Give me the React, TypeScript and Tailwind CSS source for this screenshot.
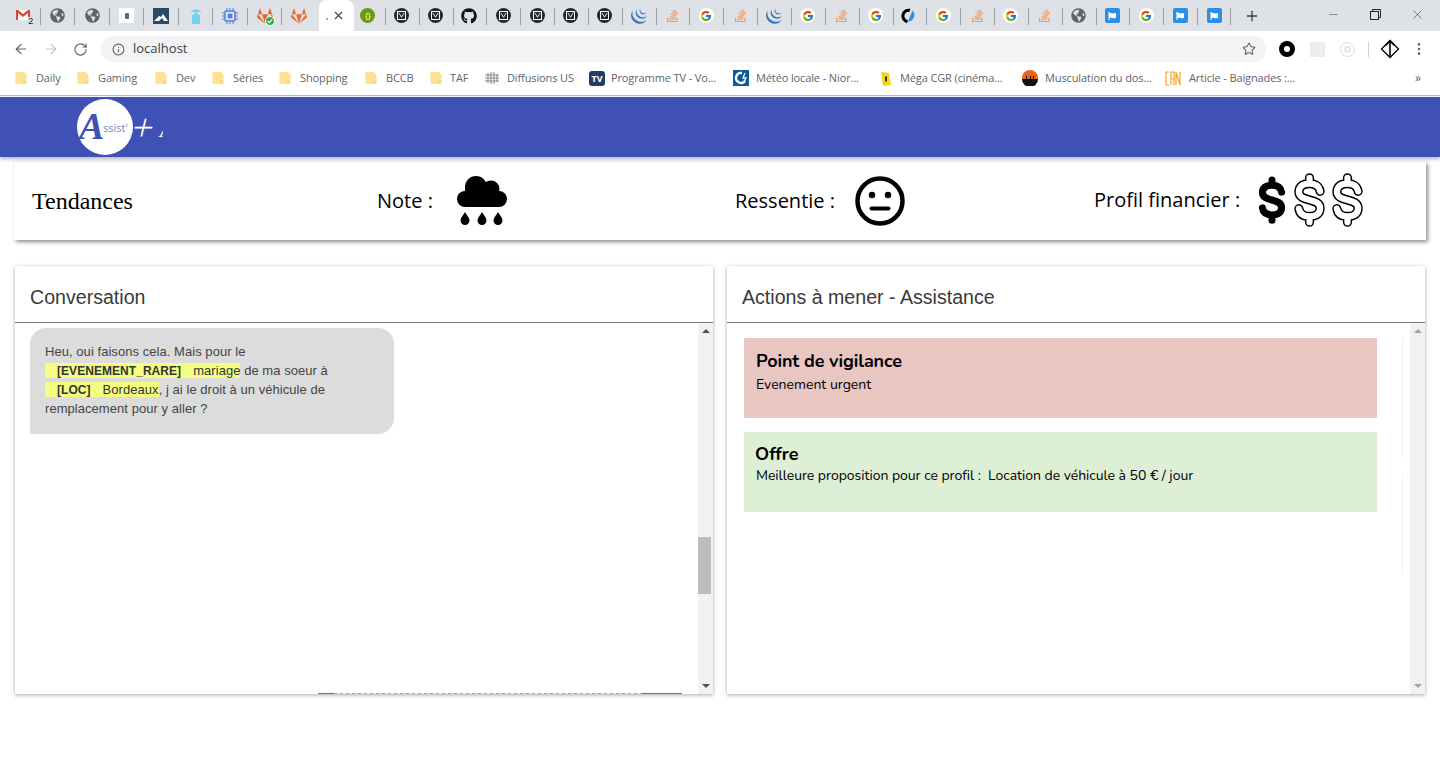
import { ArrowLeft, ArrowRight, EllipsisVertical, Info, Minus, Plus, RotateCw, Star, X } from 'lucide-react'
import { FaGithub, FaGitlab, FaStackOverflow, FaGlobeAmericas, FaFlag } from 'react-icons/fa'
import { FcGoogle } from 'react-icons/fc'
import { SiJquery } from 'react-icons/si'

type FavName = 'gmail' | 'globe' | 'doc' | 'mountain' | 'bottle' | 'chip' | 'gitcheck' | 'gitlab' | 'green' | 'm' | 'github' | 'jquery' | 'so' | 'google' | 'ring' | 'flag'

function Fav({ name }: { name: FavName }) {
  switch (name) {
    case 'gmail':
      return (
        <div className="relative w-4 h-4">
          <svg viewBox="0 0 16 16" className="w-4 h-4">
            <path d="M1 2h14v10H1z" fill="#fff" />
            <path d="M1 12V2h2l5 4 5-4h2v10h-2V5L8 9 3 5v7z" fill="#dc4437" />
          </svg>
          <span className="absolute right-[-2px] bottom-[-2px] text-[9px] leading-[9px] font-['Liberation_Sans',sans-serif] text-[#222] bg-[#dee1e6]">2</span>
        </div>
      )
    case 'globe':
      return <FaGlobeAmericas size={15} color="#5f6368" />
    case 'doc':
      return (
        <div className="w-[15px] h-[15px] bg-white flex items-center justify-center">
          <div className="w-[4px] h-[6px] rounded-[1px] bg-[#666]" />
        </div>
      )
    case 'mountain':
      return (
        <svg viewBox="0 0 16 16" className="w-4 h-4">
          <rect width="16" height="16" fill="#2c4a66" />
          <path d="M1 13l5-5 2 1 2-3 5 7z" fill="#fff" />
          <path d="M6 13l3-3 2 3z" fill="#2c4a66" />
        </svg>
      )
    case 'bottle':
      return (
        <svg viewBox="0 0 16 16" className="w-4 h-4">
          <path d="M3 3l5-2 5 2v1H9v2h2l1 2v8H4V8l1-2h2V4H3z" fill="#74d2f2" />
        </svg>
      )
    case 'chip':
      return (
        <svg viewBox="0 0 16 16" className="w-4 h-4" fill="none" stroke="#4d7fe6">
          <rect x="3" y="3" width="10" height="10" rx="1" strokeWidth="1.4" />
          <rect x="6" y="6" width="4" height="4" fill="#4d7fe6" strokeWidth="0.5" />
          <path d="M5 0v3M8 0v3M11 0v3M5 13v3M8 13v3M11 13v3M0 5h3M0 8h3M0 11h3M13 5h3M13 8h3M13 11h3" strokeWidth="1" />
        </svg>
      )
    case 'gitcheck':
      return (
        <div className="relative w-4 h-4">
          <FaGitlab size={16} color="#e8632c" />
          <div className="absolute right-[-2px] bottom-[-2px] w-[10px] h-[10px] rounded-full bg-[#2fa84f] border border-white flex items-center justify-center">
            <svg viewBox="0 0 10 10" className="w-2 h-2" fill="none" stroke="#fff" strokeWidth="1.5"><path d="M2 5l2 2 4-4" /></svg>
          </div>
        </div>
      )
    case 'gitlab':
      return <FaGitlab size={16} color="#ec6a2c" />
    case 'green':
      return (
        <div className="w-[15px] h-[15px] rounded-full bg-[#6b9a0b] flex items-center justify-center text-[8px] leading-none text-white font-['Liberation_Sans',sans-serif]">{'{}'}</div>
      )
    case 'm':
      return (
        <div className="w-[15px] h-[15px] rounded-full bg-[#24292e] flex items-center justify-center">
          <div className="w-[9px] h-[9px] border border-white flex items-center justify-center">
            <svg viewBox="0 0 8 8" className="w-[7px] h-[7px]" fill="none" stroke="#fff" strokeWidth="1"><path d="M1 1l3 5 3-5" /></svg>
          </div>
        </div>
      )
    case 'github':
      return <FaGithub size={16} color="#111" />
    case 'jquery':
      return <SiJquery size={16} color="#2f78bd" />
    case 'so':
      return <FaStackOverflow size={15} color="#ef9a5c" />
    case 'google':
      return (
        <div className="w-[15px] h-[15px] rounded-full bg-white flex items-center justify-center">
          <FcGoogle size={12} />
        </div>
      )
    case 'ring':
      return (
        <svg viewBox="0 0 16 16" className="w-4 h-4" fill="none">
          <path d="M9 2.300a5.800 5.800 0 1 0-2.500 11.400" stroke="#000" strokeWidth="3" />
          <path d="M11.500 2.500l-4.500 11a6.500 6.500 0 0 0 4.500-11z" fill="#2b8fe8" />
        </svg>
      )
    case 'flag':
      return (
        <div className="w-[15px] h-[15px] rounded-[2px] bg-[#2b8fe8] flex items-center justify-center">
          <FaFlag size={8} color="#fff" />
        </div>
      )
  }
}

const leftTabs: FavName[] = ['gmail', 'globe', 'globe', 'doc', 'mountain', 'bottle', 'chip', 'gitcheck', 'gitlab']
const rightTabs: FavName[] = ['green', 'm', 'm', 'github', 'm', 'm', 'm', 'm', 'jquery', 'so', 'google', 'so', 'jquery', 'google', 'so', 'google', 'ring', 'google', 'so', 'google', 'so', 'globe', 'flag', 'google', 'flag', 'flag']

function TabStrip() {
  return (
    <div className="h-[31px] bg-[#dee1e6] flex items-stretch pl-[6px]">
      {leftTabs.map((t, i) => (
        <div key={i} className="w-[34.5px] h-full flex items-center justify-center relative">
          <Fav name={t} />
          {i < leftTabs.length - 1 && <div className="absolute right-0 top-[8px] h-[17px] w-px bg-[#9aa0a6]" />}
        </div>
      ))}
      <div className="w-[35px] ml-[2.5px] -mr-[3px] h-full bg-white rounded-t-lg flex items-center pl-[7px] gap-[3.5px] shrink-0">
        <div className="w-[2px] h-[2px] mt-[7px] bg-[#f0a040]" />
        <X size={13} color="#3c4043" strokeWidth={2} />
      </div>
      {rightTabs.map((t, i) => (
        <div key={i} className="w-[33.85px] h-full flex items-center justify-center relative">
          <Fav name={t} />
          {i > 0 && <div className="absolute left-0 top-[8px] h-[17px] w-px bg-[#9aa0a6]" />}
          {i === rightTabs.length - 1 && <div className="absolute right-0 top-[8px] h-[17px] w-px bg-[#9aa0a6]" />}
        </div>
      ))}
      <div className="ml-[13px] flex items-center">
        <Plus size={16} color="#3c4043" strokeWidth={2} />
      </div>
      <div className="ml-auto flex items-center pr-[15px] -mt-[3px]">
        <Minus size={13} color="#3c4043" strokeWidth={1} />
        <svg viewBox="0 0 11 11" className="w-[11px] h-[11px] ml-[30px]" fill="none" stroke="#222" strokeWidth="1">
          <rect x="0.500" y="2.500" width="8" height="8" />
          <path d="M2.500 2.500v-2h8v8h-2" />
        </svg>
        <X size={15} color="#3c4043" strokeWidth={1} className="ml-[29px]" />
      </div>
    </div>
  )
}

function Toolbar() {
  return (
    <div className="h-[33px] bg-white flex items-center pt-[3px]">
      <div className="flex items-center pl-[13px] gap-[14px] w-[101px]">
        <ArrowLeft size={16} color="#5f6368" strokeWidth={1.8} />
        <ArrowRight size={16} color="#c0c3c7" strokeWidth={1.8} />
        <RotateCw size={15} color="#5f6368" strokeWidth={1.8} />
      </div>
      <div className="w-[1165px] h-[26px] rounded-full bg-[#f1f3f4] flex items-center pl-[11px] pr-[10px]">
        <Info size={13} color="#5f6368" strokeWidth={2} />
        <span className="ml-[8px] text-[13px] text-[#3c4043] font-['Open_Sans',sans-serif]">localhost</span>
        <Star size={14} color="#5f6368" strokeWidth={1.8} className="ml-auto" />
      </div>
      <div className="flex items-center ml-[13px] gap-[15px]">
        <div className="w-[16px] h-[16px] rounded-full border-[5px] border-black" />
        <div className="w-[15px] h-[15px] bg-[#ececec] flex items-center justify-center">
          <div className="w-[9px] h-[9px] rounded-full border border-[#f8f8f8]" />
        </div>
        <div className="w-[15px] h-[15px] rounded-full border border-[#dcdcdc] flex items-center justify-center">
          <div className="w-[7px] h-[7px] rounded-full border-2 border-[#e4e4e4]" />
        </div>
      </div>
      <div className="w-px h-[15px] bg-[#d0d3d6] ml-[13px]" />
      <svg viewBox="0 0 20 20" className="w-[20px] h-[20px] ml-[11px]" fill="none" stroke="#000" strokeWidth="1.3">
        <path d="M10 1.500l8.500 8.500-8.500 8.500-8.500-8.500z" />
        <path d="M10 2v15M5.500 6.500l4.500-4.500 4.500 4.500" strokeWidth="1.6" />
      </svg>
      <EllipsisVertical size={16} color="#5f6368" className="ml-[11px]" />
    </div>
  )
}

function Folder() {
  return (
    <svg viewBox="0 0 12 15" className="w-[12px] h-[14px]">
      <path d="M0 2a1 1 0 0 1 1-1h8l3 3v9a1 1 0 0 1-1 1H1a1 1 0 0 1-1-1z" fill="#fde293" />
      <path d="M9 14v-3h3" fill="none" stroke="#e8c760" strokeWidth="0.7" />
    </svg>
  )
}

const bookmarks = [
  { label: 'Daily', w: 'w-[62px]', gap: 'gap-[9px]', icon: <Folder /> },
  { label: 'Gaming', w: 'w-[78px]', gap: 'gap-[9px]', icon: <Folder /> },
  { label: 'Dev', w: 'w-[57px]', gap: 'gap-[9px]', icon: <Folder /> },
  { label: 'Séries', w: 'w-[67px]', gap: 'gap-[9px]', icon: <Folder /> },
  { label: 'Shopping', w: 'w-[86px]', gap: 'gap-[9px]', icon: <Folder /> },
  { label: 'BCCB', w: 'w-[65px]', gap: 'gap-[9px]', icon: <Folder /> },
  { label: 'TAF', w: 'w-[54px]', gap: 'gap-[8px]', icon: <Folder /> },
  {
    label: 'Diffusions US',
    w: 'w-[105px]',
    gap: 'gap-[7px]',
    icon: (
      <svg viewBox="0 0 16 14" className="w-[16px] h-[14px]" fill="none" stroke="#8a8a8a" strokeWidth="1.1">
        <path d="M1 4h14M1 7h14M1 10h14M4 2v10M7 1v12M10 1v12M13 3v8" />
      </svg>
    ),
  },
  {
    label: 'Programme TV - Vo...',
    w: 'w-[144px]',
    gap: 'gap-[6px]',
    icon: <div className="w-[16px] h-[15px] rounded-[3px] bg-[#1d3f66] text-white text-[9px] leading-[15px] font-bold text-center">TV</div>,
  },
  {
    label: 'Météo locale - Nior...',
    w: 'w-[147px]',
    gap: 'gap-[7px]',
    icon: (
      <svg viewBox="0 0 16 16" className="w-[16px] h-[16px]">
        <rect width="16" height="16" fill="#0d5b9c" />
        <path d="M9 3a5 5 0 1 0 3 8" fill="none" stroke="#fff" strokeWidth="2.4" />
        <path d="M12 3l-2 5h3l-2 4" fill="none" stroke="#fff" strokeWidth="1.3" />
      </svg>
    ),
  },
  {
    label: 'Méga CGR (cinéma...',
    w: 'w-[142px]',
    gap: 'gap-[9px]',
    icon: (
      <svg viewBox="0 0 11 15" className="w-[11px] h-[15px]">
        <path d="M1 1l8 1 2 12-8 1z" fill="#f9d21a" />
        <path d="M5 6l2-1v5l-2 1z" fill="#333" />
      </svg>
    ),
  },
  {
    label: 'Musculation du dos...',
    w: 'w-[143px]',
    gap: 'gap-[7px]',
    icon: (
      <svg viewBox="0 0 16 16" className="w-[16px] h-[16px]">
        <circle cx="8" cy="8" r="8" fill="#e8661a" />
        <path d="M0 9h16a8 8 0 0 1-16 0z" fill="#111" />
        <path d="M4 6h1v3H4zM8 6h1v3H8zM11 6h1v3h-1z" fill="#111" />
      </svg>
    ),
  },
  {
    label: 'Article - Baignades :...',
    w: 'w-[230px]',
    gap: 'gap-[8px]',
    icon: (
      <svg viewBox="0 0 16 15" className="w-[16px] h-[15px]" fill="none" stroke="#f5a623" strokeWidth="1.2">
        <path d="M4 1H1v13h3M6 14V1h3v13M6 8h3M11 14V1l4 13V1" />
      </svg>
    ),
  },
]

function BookmarksBar() {
  return (
    <div className="h-[31px] bg-white flex items-center pl-[15px] pb-[3px] relative">
      {bookmarks.map((b) => (
        <div key={b.label} className={`${b.w} ${b.gap} flex items-center shrink-0`}>
          {b.icon}
          <span className="text-[11px] tracking-[-0.12px] text-[#5f6368] whitespace-nowrap font-['Open_Sans',sans-serif]">{b.label}</span>
        </div>
      ))}
      <span className="absolute left-[1415px] top-[5px] text-[12px] text-[#5f6368] font-['Open_Sans',sans-serif]">»</span>
    </div>
  )
}

function Logo() {
  return (
    <div className="flex items-center ml-[77px] w-[86px] h-[60px] overflow-hidden">
      <div className="w-[56px] h-[56px] rounded-full bg-white flex items-center pl-[2px] shrink-0">
        <span className="text-[38px] leading-none italic font-bold text-[#3f51b5] font-['Liberation_Serif',serif] w-[24px] -mt-[3px]">A</span>
        <span className="text-[11px] text-[#7986cb] mt-[3px] font-['Open_Sans',sans-serif]">ssist'</span>
      </div>
      <span className="inline-block -skew-x-[14deg] text-[38px] leading-none text-white font-light font-['Open_Sans',sans-serif] mt-[-2px]">+</span>
      <span className="inline-block italic text-[24px] leading-none text-white font-['Liberation_Serif',serif] ml-[5px] mt-[4px]">A</span>
    </div>
  )
}

function RainCloud() {
  return (
    <svg viewBox="0 0 50 50" className="w-[50px] h-[50px]" fill="#000">
      <circle cx="8" cy="23" r="8" />
      <circle cx="19" cy="11" r="11" />
      <circle cx="34" cy="13" r="8.500" />
      <circle cx="42" cy="23" r="8" />
      <rect x="8" y="13" width="34" height="18" />
      <path d="M8 36c2 3.500 4.500 5.500 4.500 8.500a4.500 4.500 0 0 1-9 0c0-3 2.500-5 4.500-8.500z" />
      <path d="M25 36c2 3.500 4.500 5.500 4.500 8.500a4.500 4.500 0 0 1-9 0c0-3 2.500-5 4.500-8.500z" />
      <path d="M41 36c2 3.500 4.500 5.500 4.500 8.500a4.500 4.500 0 0 1-9 0c0-3 2.500-5 4.500-8.500z" />
    </svg>
  )
}

function NeutralFace() {
  return (
    <svg viewBox="0 0 50 50" className="w-[50px] h-[50px]">
      <circle cx="25" cy="25" r="22.500" fill="none" stroke="#000" strokeWidth="4.500" />
      <circle cx="17" cy="19" r="3.200" fill="#000" />
      <circle cx="33" cy="19" r="3.200" fill="#000" />
      <rect x="14.500" y="30.500" width="21" height="4" rx="2" fill="#000" />
    </svg>
  )
}

const dollarPath = 'M27 19C26 13 21 11 16 11C9 11 5 14 5 19.500C5 25 10 26.500 16 28C22 29.500 27 31 27 36.500C27 42 23 45 16 45C10 45 6 43 5 37M16 5V11M16 45V51'

function FilledDollar() {
  return (
    <svg viewBox="0 0 32 56" className="w-[28px] h-[50px]" fill="none" stroke="#000" strokeWidth="8" strokeLinecap="round">
      <path d={dollarPath} />
    </svg>
  )
}

function OutlineDollar() {
  return (
    <svg viewBox="0 0 32 56" className="w-[31px] h-[54px]" fill="none" strokeLinecap="round">
      <path d={dollarPath} stroke="#000" strokeWidth="9.500" />
      <path d={dollarPath} stroke="#fff" strokeWidth="6.500" />
    </svg>
  )
}

function TrendBar() {
  return (
    <div className="mx-[14px] mt-[5px] h-[78px] bg-white shadow-[2px_2px_4px_rgba(0,0,0,0.45)] flex items-center pl-[18px] text-black font-['Open_Sans',sans-serif] text-[20px]">
      <div className="w-[345px] text-[24px] -mt-[1px] font-['Liberation_Serif',serif]">Tendances</div>
      <div className="w-[358px] flex items-center gap-[24px]">
        <span>Note :</span>
        <RainCloud />
      </div>
      <div className="w-[359px] flex items-center gap-[20px]">
        <span>Ressentie :</span>
        <NeutralFace />
      </div>
      <div className="flex items-center gap-[18px]">
        <span className="-mt-[3px]">Profil financier :</span>
        <div className="flex items-center -mt-[3px]">
          <FilledDollar />
          <div className="ml-[8px]"><OutlineDollar /></div>
          <div className="ml-[7px]"><OutlineDollar /></div>
        </div>
      </div>
    </div>
  )
}

function Scrollbar({ thumb }: { thumb: boolean }) {
  return (
    <div className="w-[15px] bg-[#f1f1f1] flex flex-col items-center justify-between py-[6px] relative shrink-0">
      <div className={`w-0 h-0 border-x-[4px] border-x-transparent border-b-[4px] ${thumb ? 'border-b-[#505050]' : 'border-b-[#a3a3a3]'}`} />
      {thumb && <div className="absolute left-0 top-[214px] w-[13px] h-[57px] bg-[#bdbdbd]" />}
      <div className={`w-0 h-0 border-x-[4px] border-x-transparent border-t-[4px] ${thumb ? 'border-t-[#505050]' : 'border-t-[#a3a3a3]'}`} />
    </div>
  )
}

function Panel({ title, thumb, children }: { title: string; thumb: boolean; children: React.ReactNode }) {
  return (
    <div className="w-[698px] h-[428px] bg-white shadow-[0_1px_4px_rgba(0,0,0,0.35)] flex flex-col relative">
      <div className="h-[57px] shrink-0 border-b border-[#777] flex items-center pl-[15px] pt-[8px] text-[19.600px] text-[#3a3a3a] font-['Liberation_Sans',sans-serif]">
        {title}
      </div>
      <div className="flex-1 flex min-h-0">
        <div className="flex-1 min-w-0 relative">{children}</div>
        <Scrollbar thumb={thumb} />
      </div>
    </div>
  )
}

function Highlight({ children }: { children: React.ReactNode }) {
  return <span className="bg-[#f4ff81] text-[#333]">{children}</span>
}

function Tag({ children }: { children: React.ReactNode }) {
  return <b className="px-3 text-[12px] leading-none font-bold">{children}</b>
}

function Conversation() {
  return (
    <div className="pt-[5px] pl-[15px]">
      <div className="w-[364px] h-[106px] bg-[#dcdcdc] rounded-t-[16px] rounded-br-[16px] px-[15px] py-[14px] text-[13px] leading-[19px] tracking-[0.05px] text-[#444] font-['Liberation_Sans',sans-serif]">
        Heu, oui faisons cela. Mais pour le
        <br />
        <Highlight><Tag>[EVENEMENT_RARE]</Tag>mariage</Highlight> de ma soeur à
        <br />
        <Highlight><Tag>[LOC]</Tag>Bordeaux</Highlight>, j ai le droit à un véhicule de
        <br />
        remplacement pour y aller ?
      </div>
      <div className="absolute left-[303px] right-[16px] bottom-0 h-px flex">
        <div className="w-[16px] bg-[#6572b8]" />
        <div className="flex-1 bg-[repeating-linear-gradient(90deg,#9aa3d0_0_3px,#e4e6f2_3px_6px)]" />
        <div className="w-[40px] bg-[#6572b8]" />
      </div>
    </div>
  )
}

function Actions() {
  return (
    <div className="pt-[15px] pl-[17px] pr-[33px] flex flex-col gap-[14px] font-['Nunito','Lato',sans-serif] text-black">
      <div className="h-[80px] bg-[#eac6c3] pl-[12px] pt-[11px]">
        <div className="text-[18px] font-bold leading-[25px] tracking-[-0.1px]">Point de vigilance</div>
        <div className="text-[14px] leading-[20px] mt-[1px]">Evenement urgent</div>
      </div>
      <div className="h-[80px] bg-[#ddf0d5] pl-[12px] pt-[10px]">
        <div className="text-[18px] font-bold leading-[24px] -ml-px">Offre</div>
        <div className="text-[14px] leading-[20px] whitespace-pre tracking-[-0.03px]">Meilleure proposition pour ce profil :  Location de véhicule à 50 € / jour</div>
      </div>
      <div className="absolute right-[7px] top-[15px] w-px h-[120px] bg-[#f0f0f0]" />
      <div className="absolute right-[7px] top-[153px] w-px h-[97px] bg-[#f0f0f0]" />
    </div>
  )
}

export default function App() {
  return (
    <div className="h-[772px] bg-white overflow-hidden">
      <TabStrip />
      <Toolbar />
      <BookmarksBar />
      <div className="h-px bg-[#b8bbc4]" />
      <div className="h-px bg-white" />
      <div className="h-[60px] bg-[#3f51b5] shadow-[0_2px_4px_rgba(0,0,0,0.3)] flex items-center relative">
        <Logo />
      </div>
      <TrendBar />
      <div className="mt-[26px] pl-[15px] flex gap-[14px]">
        <Panel title="Conversation" thumb>
          <Conversation />
        </Panel>
        <Panel title="Actions à mener - Assistance" thumb={false}>
          <Actions />
        </Panel>
      </div>
    </div>
  )
}
